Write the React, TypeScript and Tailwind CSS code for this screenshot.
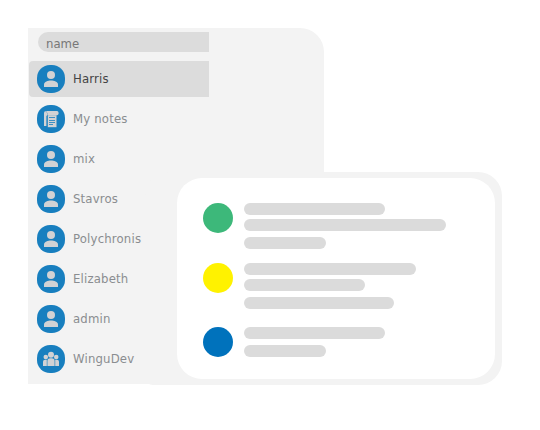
import React from "react";

type Kind = "user" | "notes" | "group";

const contacts: { name: string; kind: Kind; active?: boolean }[] = [
  { name: "Harris", kind: "user", active: true },
  { name: "My notes", kind: "notes" },
  { name: "mix", kind: "user" },
  { name: "Stavros", kind: "user" },
  { name: "Polychronis", kind: "user" },
  { name: "Elizabeth", kind: "user" },
  { name: "admin", kind: "user" },
  { name: "WinguDev", kind: "group" },
];

function Glyph({ kind }: { kind: Kind }) {
  return (
    <svg viewBox="0 0 28 28" className="size-7" fill="#d2d2d4">
      {kind === "user" && (
        <>
          <circle cx="14" cy="10" r="4" />
          <path d="M7 22v-2.6C7 16.9 11 15.5 14 15.5s7 1.4 7 3.9V22Z" />
        </>
      )}
      {kind === "notes" && (
        <>
          <path d="M7 8.2C7 5.4 10 5.6 10 8.2v2.6h-.6V21H7Z" />
          <path d="M9 6h11c2.2.4 2.2 4 0 4.2H10.3V8Z" />
          <path d="M10.8 10.2h8.7V22.2h-8.7Z" />
          <path d="M12 12.5h6M12 15.5h6M12 17.5h6M12 19.5h4" stroke="#187fbf" strokeWidth="0.8" />
        </>
      )}
      {kind === "group" && (
        <>
          <circle cx="14" cy="9.8" r="3" />
          <circle cx="8.8" cy="12" r="2.3" />
          <circle cx="19.2" cy="12" r="2.3" />
          <path d="M10.4 21v-5a2.8 2.8 0 0 1 2.8-2.8h1.6a2.8 2.8 0 0 1 2.8 2.8v5Z" />
          <path d="M6 21v-4.3a2 2 0 0 1 2-2h1.8V21ZM22 21v-4.3a2 2 0 0 0-2-2h-1.8V21Z" />
        </>
      )}
    </svg>
  );
}

function Sidebar() {
  return (
    <aside className="h-[356px] w-[296px] rounded-tr-3xl bg-[#f3f3f3] pt-1">
      <div className="ml-2.5 flex h-5 w-[171px] items-center rounded-l-full bg-[#dcdcdc] pl-2 pt-[3px] text-[#777]">
        name
      </div>
      <ul className="ml-px mt-[9px] flex w-[180px] flex-col gap-1">
        {contacts.map((c) => (
          <li
            key={c.name}
            className={`flex h-9 items-center gap-2 rounded-l pl-2 ${
              c.active ? "bg-[#dcdcdc] text-[#444]" : "text-[#8a8d90]"
            }`}
          >
            <span className="size-7 rounded-[13px] bg-[#187fbf]">
              <Glyph kind={c.kind} />
            </span>
            <span className="whitespace-nowrap tracking-[0.18px]">{c.name}</span>
          </li>
        ))}
      </ul>
    </aside>
  );
}

function Bar({ size }: { size: string }) {
  return <div className={`h-3 rounded-full bg-[#dbdbdb] ${size}`} />;
}

function MessageCard() {
  return (
    <section className="absolute left-[145px] top-[172px] h-[213px] w-[357px] rounded-3xl rounded-bl-lg bg-[#f3f3f3] pl-8 pt-1.5">
      <div className="flex h-[201px] w-[318px] flex-col rounded-[25px] bg-white pl-[26px] pt-[25px]">
        <div className="flex h-[60px] gap-[11px]">
          <div className="size-[30px] rounded-full bg-[#3db87a]" />
          <div>
            <Bar size="w-[141px]" />
            <Bar size="mt-1 w-[202px]" />
            <Bar size="mt-1.5 w-[82px]" />
          </div>
        </div>
        <div className="flex h-16 gap-[11px]">
          <div className="size-[30px] rounded-full bg-[#fff200]" />
          <div>
            <Bar size="w-[172px]" />
            <Bar size="mt-1 w-[121px]" />
            <Bar size="mt-1.5 w-[150px]" />
          </div>
        </div>
        <div className="flex gap-[11px]">
          <div className="size-[30px] rounded-full bg-[#0072bc]" />
          <div>
            <Bar size="w-[141px]" />
            <Bar size="mt-1.5 w-[82px]" />
          </div>
        </div>
      </div>
    </section>
  );
}

export default function App() {
  return (
    <main className="relative h-[430px] w-[540px] overflow-hidden bg-white pl-7 pt-7 font-['DejaVu_Sans_Condensed','DejaVu_Sans',sans-serif] text-[13px] leading-4">
      <Sidebar />
      <MessageCard />
    </main>
  );
}
